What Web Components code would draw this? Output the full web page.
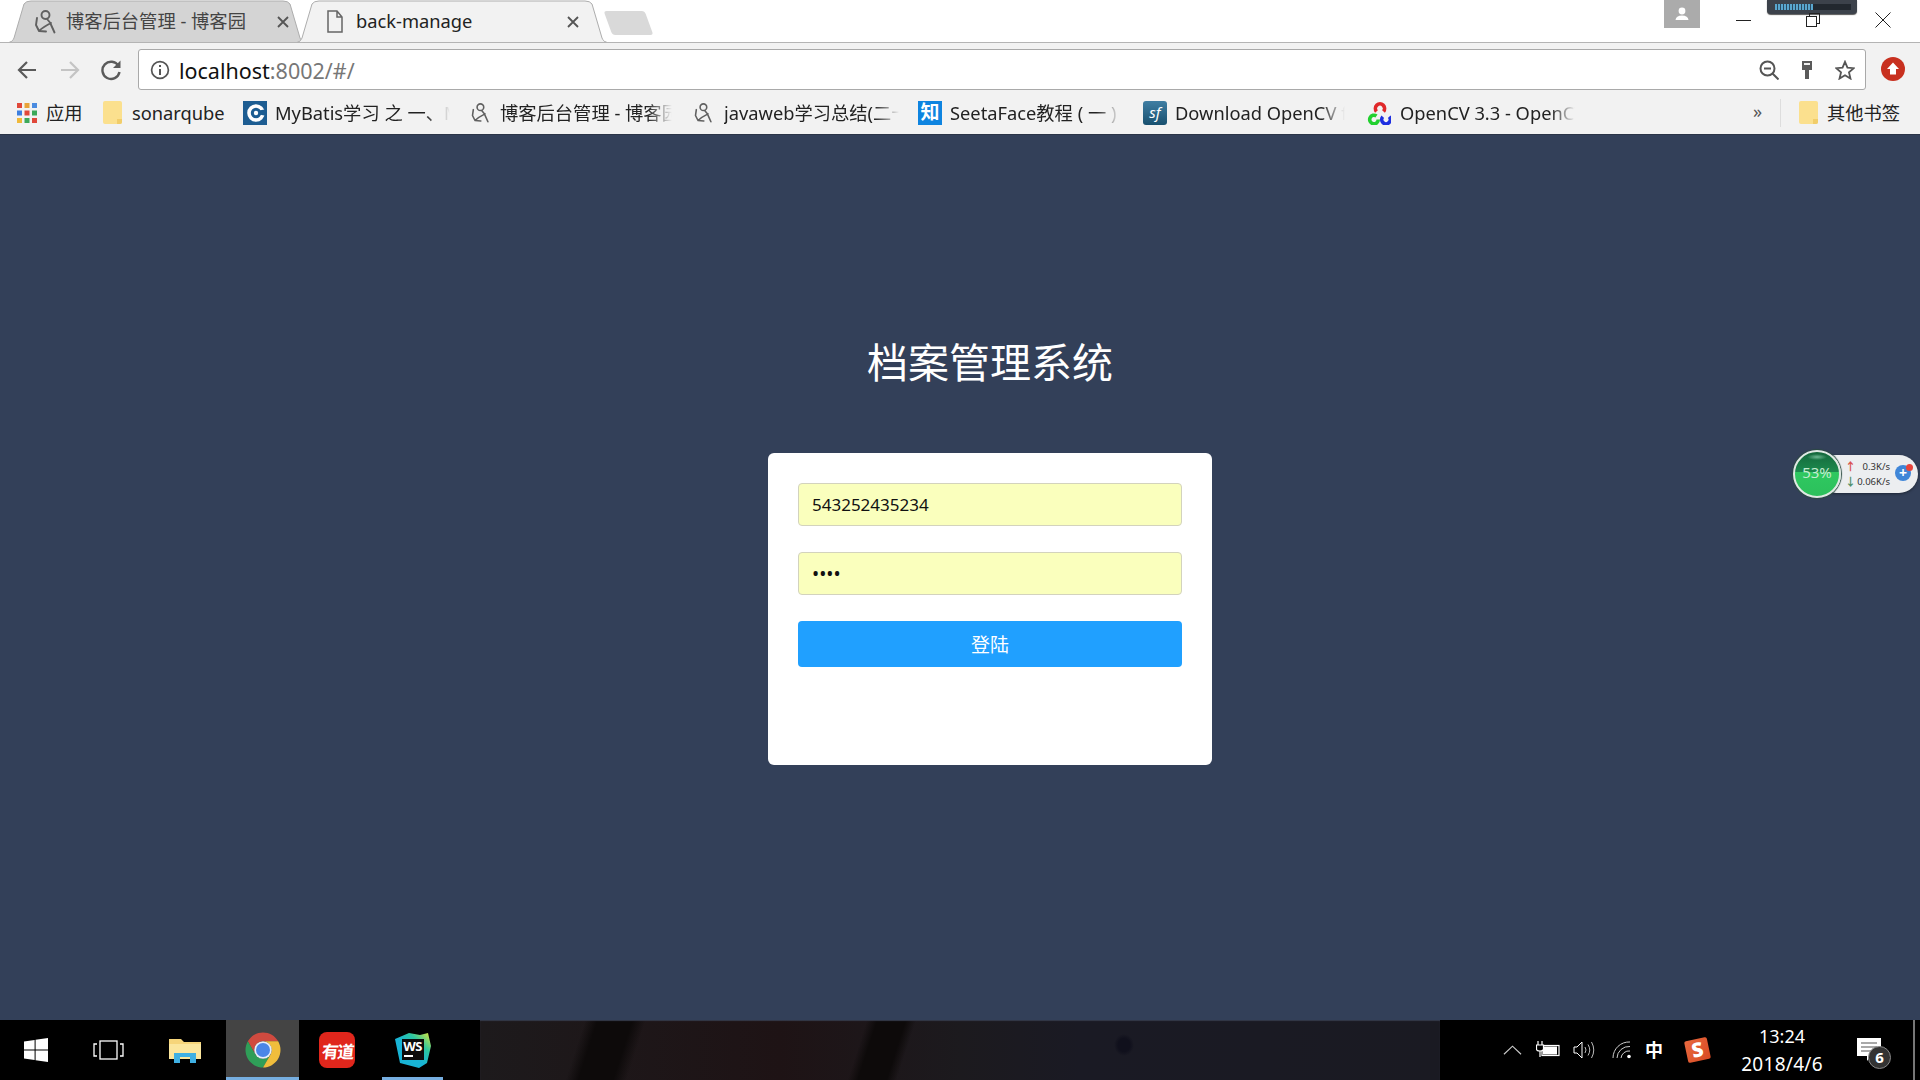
<!DOCTYPE html>
<html lang="zh-CN">
  <head>
    <meta charset="UTF-8">
    <title>back-manage</title>
    <style>
      html, body { margin: 0; height: 100%; overflow: hidden; }
      body { font-family: "Noto Sans", "Noto Sans CJK SC", sans-serif; }
      desktop-screen { --cjk: "Noto Sans", "Noto Sans CJK SC", sans-serif; }
    </style>
  </head>
  <body>
    <desktop-screen>
      <tab-strip>
        <browser-tab w="296" label="博客后台管理 - 博客园" icon="cnblogs" style="--pad:25px;--gap:10px;--end:16px;--fill:#d4d4d4;--ink:#444;margin-left:9px"></browser-tab>
        <browser-tab w="310" label="back-manage" icon="page" active style="--pad:30px;--gap:13px;--end:28px;--fill:#f2f2f2;--ink:#222;margin-left:-8px"></browser-tab>
      </tab-strip>
      <address-bar url-host="localhost" url-rest=":8002/#/"></address-bar>
      <bookmark-bar>
        <bookmark-item w="86" icon="apps" gap="9">应用</bookmark-item>
        <bookmark-item w="140" icon="folder" size="19" gap="10">sonarqube</bookmark-item>
        <bookmark-item w="227" tw="175" fade icon="mybatis" size="24">MyBatis学习 之 一、MyBatis</bookmark-item>
        <bookmark-item w="223" tw="172" fade icon="cnblogs" size="20" gap="10">博客后台管理 - 博客园</bookmark-item>
        <bookmark-item w="225" tw="175" fade icon="cnblogs" size="20" gap="11">javaweb学习总结(二十)</bookmark-item>
        <bookmark-item w="225" tw="170" fade icon="zhi" size="24">SeetaFace教程 ( 一 )</bookmark-item>
        <bookmark-item w="224" tw="170" fade icon="sf" size="24">Download OpenCV for</bookmark-item>
        <bookmark-item w="386" tw="175" fade icon="opencv" size="24" gap="9">OpenCV 3.3 - OpenCV</bookmark-item>
      </bookmark-bar>
      <login-page>
        <login-card>
          <login-field value="543252435234"></login-field>
          <login-field value="••••" secret></login-field>
          <login-button>登陆</login-button>
        </login-card>
      </login-page>
      <task-bar></task-bar>
    </desktop-screen>

    <script>
      const ICONS = {
        cnblogs: `<svg viewBox="0 0 22 24" fill="none" stroke="#606060" stroke-width="1.9" stroke-linecap="round" stroke-linejoin="round"><circle cx="11.5" cy="5" r="4"/><path d="M13 9 L16 12.5 L20.5 22.5 M3 8 L2 15 L5 21 L12 21.5 M5 21 C9 17 13 15 17 13"/></svg>`,
        page: `<svg viewBox="0 0 16 23" fill="none" stroke="#666" stroke-width="1.5"><path d="M1 1 H10 L15 7 V22 H1 Z M10 1 V7 H15"/></svg>`,
        back: `<svg viewBox="0 0 20 20" fill="none" stroke="#5a5a5a" stroke-width="2.2"><path d="M19 10 H2 M10 2 L2 10 L10 18"/></svg>`,
        forward: `<svg viewBox="0 0 20 20" fill="none" stroke="#c4c4c4" stroke-width="2.2"><path d="M1 10 H18 M10 2 L18 10 L10 18"/></svg>`,
        reload: `<svg viewBox="0 0 22 22" fill="none" stroke="#5a5a5a" stroke-width="2.4"><path d="M18.5 7 A8.6 8.6 0 1 0 19.5 13"/><path d="M20.5 1.5 V9 H13" fill="#5a5a5a" stroke="none"/></svg>`,
        info: `<svg viewBox="0 0 20 20" fill="none" stroke="#555" stroke-width="1.7"><circle cx="10" cy="10" r="8.4"/><path d="M10 9 V15 M10 5 V7" stroke-width="2"/></svg>`,
        zoomout: `<svg viewBox="0 0 20 20" fill="none" stroke="#555" stroke-width="2"><circle cx="8.5" cy="8.5" r="7"/><path d="M5 8.5 H12 M13.5 13.5 L19.5 19.5"/></svg>`,
        key: `<svg viewBox="0 0 12 20" fill="#5a5a5a"><path d="M1 1 H11 V10 H8 V19 H4 V10 H1 Z"/><rect x="3" y="3" width="6" height="2" fill="#eee"/></svg>`,
        star: `<svg viewBox="0 0 22 22" fill="none" stroke="#555" stroke-width="2"><path d="M11 2 L13.7 8.4 L20.6 9 L15.4 13.6 L17 20.4 L11 16.8 L5 20.4 L6.6 13.6 L1.4 9 L8.3 8.4 Z"/></svg>`,
        upload: `<svg viewBox="0 0 24 24"><circle cx="12" cy="12" r="12" fill="#c8301f"/><path d="M12 5.5 L18 12 H15 V17.5 H9 V12 H6 Z" fill="#fff"/></svg>`,
        apps: `<svg viewBox="0 0 20 20"><g><rect width="5" height="5" fill="#e0483a"/><rect x="7.5" width="5" height="5" fill="#e8a33a"/><rect x="15" width="5" height="5" fill="#4a8be0"/><rect y="7.5" width="5" height="5" fill="#3d7fe0"/><rect x="7.5" y="7.5" width="5" height="5" fill="#e0483a"/><rect x="15" y="7.5" width="5" height="5" fill="#3da95a"/><rect y="15" width="5" height="5" fill="#f0b93a"/><rect x="7.5" y="15" width="5" height="5" fill="#3da95a"/><rect x="15" y="15" width="5" height="5" fill="#e0483a"/></g></svg>`,
        folder: `<svg viewBox="0 0 19 23"><path d="M2 0 H17 Q19 0 19 2 V21 Q19 23 17 23 H2 Q0 23 0 21 V2 Q0 0 2 0 Z" fill="#fbe08e"/><path d="M14 23 V18 H19 V21 Q19 23 17 23 Z" fill="#f1cd6a"/></svg>`,
        mybatis: `<svg viewBox="0 0 24 24"><rect width="24" height="24" fill="#1d5d92"/><circle cx="13" cy="12" r="7" fill="none" stroke="#fff" stroke-width="3.6"/><circle cx="13" cy="12" r="2.2" fill="#fff"/><path d="M16 9.5 L24 8 V15 L16 13.5 Z" fill="#1d5d92"/></svg>`,
        opencv: `<svg viewBox="0 0 24 24" fill="none" stroke-width="3.6"><path d="M9.5 10.5 A4.6 4.6 0 1 1 16.5 10.5" stroke="#e0282a"/><path d="M9.5 15 A4.3 4.3 0 1 0 11.3 18.5" stroke="#22d02f"/><path d="M15.8 15.7 A4.3 4.3 0 1 0 22.2 15.7" stroke="#1e2fe0"/></svg>`,
        windows: `<svg viewBox="0 0 24 24" fill="#fff"><path d="M0 3.4 L10.6 2 V11.4 H0 Z M11.6 1.8 L24 0 V11.4 H11.6 Z M0 12.6 H10.6 V22 L0 20.6 Z M11.6 12.6 H24 V24 L11.6 22.2 Z"/></svg>`,
        taskview: `<svg viewBox="0 0 31 20" fill="none" stroke="#fff" stroke-width="1.3"><rect x="7" y="1" width="17" height="18"/><path d="M4 4 H1 V16 H4 M27 4 H30 V16 H27"/></svg>`,
        explorer: `<svg viewBox="0 0 32 26"><path d="M0 2 H12 L15 5 H32 V22 H0 Z" fill="#f6d57a"/><path d="M0 7 H32 V22 H0 Z" fill="#fbe69d"/><path d="M5 26 V16 H27 V26 H21 V20 H11 V26 Z" fill="#3fb0e3"/></svg>`,
        chrome: `<svg viewBox="0 0 48 48"><path d="M41.32 14 A20 20 0 0 0 6.68 14 L15.34 29 A10 10 0 0 1 24 14 Z" fill="#cf4a3f"/><path d="M6.68 14 A20 20 0 0 0 24 44 L32.66 29 A10 10 0 0 1 15.34 29 Z" fill="#2f9e58"/><path d="M24 44 A20 20 0 0 0 41.32 14 L24 14 A10 10 0 0 1 32.66 29 Z" fill="#f0bd3c"/><circle cx="24" cy="24" r="10" fill="#e8eef8"/><circle cx="24" cy="24" r="8" fill="#4a86e8"/></svg>`,
        wsshape: `<svg viewBox="0 0 36 36"><defs><linearGradient id="ws" x1="0" y1="1" x2="1" y2="0"><stop offset=".45" stop-color="#18b4d6"/><stop offset=".7" stop-color="#2cc7a0"/><stop offset="1" stop-color="#e2e83a"/></linearGradient></defs><path d="M0 7 L14 1 L25 3 L33 1 L36 14 L32 31 L24 36 L5 31 Z" fill="url(#ws)"/></svg>`,
        wifi: `<svg viewBox="0 0 20 18" fill="none" stroke="#ccc" stroke-width="1"><path d="M1 17 A16 16 0 0 1 18 1 M5 17 A12 12 0 0 1 18 5.5 M9 17 A8 8 0 0 1 18 10"/><circle cx="17" cy="15.5" r="1.8" fill="#fff" stroke="none"/></svg>`,
        battery: `<svg viewBox="0 0 24 18" fill="none" stroke="#fff" stroke-width="1.2"><rect x="6" y="4.5" width="17" height="10"/><rect x="7" y="5.5" width="14" height="8" fill="#fff" stroke="none"/><path d="M2 0 V4 M6 0 V4 M0.5 4 H7.5 V8 Q7.5 10 4 10 Q0.5 10 0.5 8 Z M4 10 V16" fill="#000"/></svg>`,
        speaker: `<svg viewBox="0 0 23 18" fill="none" stroke="#bbb" stroke-width="1"><path d="M1 6 H4 L9 1 V17 L4 12 H1 Z" stroke="#fff"/><path d="M12 6 Q14 9 12 12 M15 3.5 Q18.5 9 15 14.5 M18.5 1 Q23 9 18.5 17"/></svg>`,
        chevron: `<svg viewBox="0 0 20 10" fill="none" stroke="#ccc" stroke-width="1.2"><path d="M1 9.5 L10 1 L19 9.5"/></svg>`,
        note: `<svg viewBox="0 0 24 24"><path d="M0 0 H24 V18 H14 L10 23 V18 H0 Z" fill="#fff"/><path d="M4 5 H20 M4 9 H20 M4 13 H15" stroke="#555" stroke-width="1.2"/></svg>`
      }

      // small boxed icons that hold real text instead of a path
      const TEXT_ICONS = {
        zhi: `<span style="display:flex;align-items:center;justify-content:center;width:100%;height:100%;background:#0e84e0;color:#fff;font-size:19px;font-weight:700;line-height:1">知</span>`,
        sf: `<span style="display:flex;align-items:center;justify-content:center;width:100%;height:100%;background:linear-gradient(#3f7ea3,#18506f);border-radius:3px;color:#fff;font-size:15px;font-style:italic;line-height:1">sf</span>`
      }

      class UiIcon extends HTMLElement {
        connectedCallback() {
          const name = this.getAttribute('name')
          this.attachShadow({ mode: 'open' }).innerHTML = `
            <style>
              :host { display: inline-flex; flex: none; width: var(--w, 20px); height: var(--h, 20px); }
              svg { display: block; width: 100%; height: 100%; }
            </style>
            ${ICONS[name] || TEXT_ICONS[name] || ''}`
        }
      }

      class DesktopScreen extends HTMLElement {
        constructor() {
          super()
          this.attachShadow({ mode: 'open' }).innerHTML = `
            <style>
              :host { display: flex; flex-direction: column; width: 1920px; height: 1080px; color: #222; font-family: var(--cjk); }
            </style>
            <slot></slot>`
        }
      }

      class TabStrip extends HTMLElement {
        constructor() {
          super()
          this.attachShadow({ mode: 'open' }).innerHTML = `
            <style>
              :host { display: flex; position: relative; flex: none; height: 43px; box-sizing: border-box; background: #fff; border-bottom: 1px solid #b4b4b4; }
              .new-tab { width: 41px; height: 24px; margin: 11px 0 0 1px; background: #d9d9d9; border-radius: 3px; transform: skewX(20deg); }
              .tabs { display: flex; align-items: flex-start; }
              .profile { display: flex; justify-content: center; align-items: center; width: 36px; height: 28px; margin-left: auto; margin-right: 9px; background: #ababab; }
              .profile svg { width: 16px; height: 16px; }
              .win { display: flex; justify-content: center; align-items: center; width: 70px; height: 40px; position: relative; }
              .win svg { width: 16px; height: 16px; }
              .win.mid { width: 69px; }
              .end { margin-right: 2px; }
              .gadget { position: absolute; left: 1767px; top: 0; width: 90px; height: 14px; background: #3c424b; border-radius: 0 0 4px 4px; box-shadow: 0 1px 1px #555; }
              .gadget i { display: block; position: absolute; left: 8px; right: 6px; top: 4px; height: 6px; background: #22282f; }
              .gadget i::before { content: ""; display: block; width: 38px; height: 100%; background: repeating-linear-gradient(90deg, #5aa7cf 0 2px, #2a4a60 2px 3px); }
            </style>
            <div class="tabs"><slot></slot></div>
            <div class="new-tab"></div>
            <div class="gadget"><i></i></div>
            <div class="profile"><svg viewBox="0 0 16 16" fill="#fff"><circle cx="8" cy="5" r="3.4"/><path d="M1.5 14 Q2 9.5 8 9.5 Q14 9.5 14.5 14 Z"/></svg></div>
            <div class="win mid"><svg viewBox="0 0 16 16" stroke="#222" fill="none"><path d="M0 8.5 H15"/></svg></div>
            <div class="win"><svg viewBox="0 0 16 16" stroke="#222" fill="none" shape-rendering="crispEdges"><rect x="1.5" y="4.5" width="10" height="10"/><path d="M4.5 4 V1.5 H14.5 V11.5 H12"/></svg></div>
            <div class="win end"><svg viewBox="0 0 16 16" stroke="#222" fill="none"><path d="M.5 .5 L15.5 15.5 M15.5 .5 L.5 15.5"/></svg></div>`
        }
      }

      class BrowserTab extends HTMLElement {
        connectedCallback() {
          const w = +this.getAttribute('w')
          const s = 19
          const d = `M0.5 42 C3 42 4 40 5 38 L${s - 4} 4 Q${s - 2} 1 ${s + 3} 1 L${w - s - 3} 1 Q${w - s + 2} 1 ${w - s + 4} 4 L${w - 5} 38 C${w - 4} 40 ${w - 3} 42 ${w - 0.5} 42`
          const isPage = this.getAttribute('icon') === 'page'
          this.style.width = w + 'px'
          this.attachShadow({ mode: 'open' }).innerHTML = `
            <style>
              :host { display: flex; position: relative; z-index: 0; height: 43px; align-items: center; box-sizing: border-box; padding: 0 var(--end) 0 var(--pad); color: var(--ink); font-size: 18.3px; }
              :host([active]) { z-index: 1; }
              svg.shape { position: absolute; left: 0; top: 0; width: 100%; height: 100%; z-index: -1; }
              .label { flex: 1; margin-left: var(--gap); white-space: nowrap; line-height: 1; }
              .close { width: 12px; height: 12px; }
              ui-icon { --w: ${isPage ? 16 : 22}px; --h: ${isPage ? 23 : 24}px; }
            </style>
            <svg class="shape" viewBox="0 0 ${w} 43"><path d="${d}" fill="var(--fill)" stroke="#adadad"/></svg>
            <ui-icon name="${this.getAttribute('icon')}"></ui-icon>
            <span class="label">${this.getAttribute('label')}</span>
            <svg class="close" viewBox="0 0 12 12" stroke="#555" stroke-width="1.8"><path d="M1 1 L11 11 M11 1 L1 11"/></svg>`
        }
      }

      class AddressBar extends HTMLElement {
        connectedCallback() {
          this.attachShadow({ mode: 'open' }).innerHTML = `
            <style>
              :host { display: flex; flex: none; height: 47px; box-sizing: border-box; padding-top: 6px; background: #f2f2f2; }
              .nav { display: flex; align-items: center; height: 41px; }
              .nav ui-icon:nth-child(1) { margin-left: 17px; }
              .nav ui-icon:nth-child(2) { margin-left: 23px; }
              .nav ui-icon:nth-child(3) { margin-left: 20px; --w: 22px; --h: 22px; }
              .box { display: flex; align-items: center; width: 1728px; height: 41px; margin-left: 16px; box-sizing: border-box; padding: 0 10px 0 11px; background: #fff; border: 1px solid #a9a9a9; border-radius: 3px; }
              .url { margin-left: 9px; font-size: 21.5px; line-height: 1; color: #111; white-space: nowrap; position: relative; top: 1px; }
              .url span { color: #777; }
              .tools { display: flex; align-items: center; margin-left: auto; gap: 22px; }
              .tools ui-icon:nth-child(2) { --w: 12px; }
              .red { margin: 8px 0 0 15px; --w: 24px; --h: 24px; }
            </style>
            <div class="nav">
              <ui-icon name="back"></ui-icon>
              <ui-icon name="forward"></ui-icon>
              <ui-icon name="reload"></ui-icon>
            </div>
            <div class="box">
              <ui-icon name="info"></ui-icon>
              <div class="url">${this.getAttribute('url-host')}<span>${this.getAttribute('url-rest')}</span></div>
              <div class="tools">
                <ui-icon name="zoomout"></ui-icon>
                <ui-icon name="key"></ui-icon>
                <ui-icon name="star"></ui-icon>
              </div>
            </div>
            <ui-icon class="red" name="upload"></ui-icon>`
        }
      }

      class BookmarkBar extends HTMLElement {
        constructor() {
          super()
          this.attachShadow({ mode: 'open' }).innerHTML = `
            <style>
              :host { display: flex; flex: none; align-items: center; height: 45px; box-sizing: border-box; padding: 1px 0 0 17px; background: #f2f2f2; border-bottom: 1px solid #2b3548; font-size: 18.3px; }
              .more { width: 12px; font-size: 18px; color: #555; line-height: 1; position: relative; top: -2px; }
              .sep { width: 1px; height: 28px; margin: 0 0 0 15px; background: #ddd; }
              .other { margin-left: 18px; }
            </style>
            <slot></slot>
            <div class="more">»</div>
            <div class="sep"></div>
            <bookmark-item class="other" icon="folder" size="19" gap="9" w="110">其他书签</bookmark-item>`
        }
      }

      class BookmarkItem extends HTMLElement {
        connectedCallback() {
          const size = this.getAttribute('size') || 20
          const tw = this.getAttribute('tw')
          this.style.width = this.getAttribute('w') + 'px'
          this.attachShadow({ mode: 'open' }).innerHTML = `
            <style>
              :host { display: flex; flex: none; align-items: center; gap: ${this.getAttribute('gap') || 8}px; color: #222; }
              ui-icon { --w: ${size}px; --h: ${size == 19 ? 23 : size}px; }
              .text { white-space: nowrap; overflow: hidden; line-height: 26px; ${tw ? `width: ${tw}px;` : ''} }
              :host([fade]) .text { -webkit-mask-image: linear-gradient(90deg, #000 86%, transparent 100%); mask-image: linear-gradient(90deg, #000 86%, transparent 100%); }
            </style>
            <ui-icon name="${this.getAttribute('icon')}"></ui-icon>
            <div class="text"><slot></slot></div>`
        }
      }

      class LoginPage extends HTMLElement {
        constructor() {
          super()
          this.attachShadow({ mode: 'open' }).innerHTML = `
            <style>
              :host { display: flex; flex: 1; position: relative; flex-direction: column; align-items: center; box-sizing: border-box; padding: 197px 0 0 60px; background: #334059; }
              h1 { margin: 0 0 61px; font-size: 41px; font-weight: 400; line-height: 60px; color: #fff; }
              .meter { position: absolute; left: 1793px; top: 315px; width: 127px; height: 48px; }
              .pill { position: absolute; left: 24px; right: 2px; top: 5px; height: 38px; background: #eceef0; border-radius: 19px; box-shadow: 0 1px 3px rgba(0,0,0,.4); }
              .ball { position: absolute; left: 0; top: 0; width: 48px; height: 48px; box-sizing: border-box; border: 2px solid #dfe9e3; border-radius: 50%; background: radial-gradient(ellipse 10px 3px at 50% 5px, #6fb893, transparent), linear-gradient(#14683c 0, #1c8a4d 45%, #2fc860 45%, #2cc05c); box-shadow: 0 0 1px 1px #2c4a42; color: #c4ecd0; font-size: 15px; line-height: 41px; text-align: center; }
              .speed { position: absolute; right: 30px; font-size: 9.5px; line-height: 12px; color: #333; white-space: nowrap; }
              .arrow { position: absolute; left: 52px; font-size: 11px; font-weight: 700; line-height: 12px; }
              .plus { position: absolute; left: 102px; top: 15px; width: 16px; height: 16px; border-radius: 50%; background: #3f86d8; color: #fff; font-size: 14px; font-weight: 700; line-height: 15px; text-align: center; }
              .dot { position: absolute; left: 113px; top: 14px; width: 7px; height: 7px; border-radius: 50%; background: #e8443c; }
            </style>
            <h1>档案管理系统</h1>
            <slot></slot>
            <div class="meter">
              <div class="pill"></div>
              <div class="ball">53%</div>
              <div class="arrow" style="top:11px;color:#d9534f">↑</div>
              <div class="arrow" style="top:26px;color:#4f8f6b">↓</div>
              <div class="speed" style="top:11px">0.3K/s</div>
              <div class="speed" style="top:26px">0.06K/s</div>
              <div class="plus">+</div>
              <div class="dot"></div>
            </div>`
        }
      }

      class LoginCard extends HTMLElement {
        constructor() {
          super()
          this.attachShadow({ mode: 'open' }).innerHTML = `
            <style>
              :host { display: flex; flex-direction: column; gap: 26px; width: 444px; height: 312px; box-sizing: border-box; padding: 30px; background: #fff; border-radius: 6px; }
            </style>
            <slot></slot>`
        }
      }

      class LoginField extends HTMLElement {
        connectedCallback() {
          this.attachShadow({ mode: 'open' }).innerHTML = `
            <style>
              :host { display: flex; align-items: center; height: 43px; box-sizing: border-box; padding: 0 13px; background: #faffbd; border: 1px solid #d3d3bd; border-radius: 4px; font-size: 17px; color: #111; }
              :host([secret]) span { font-size: 19px; }
            </style>
            <span>${this.getAttribute('value')}</span>`
        }
      }

      class LoginButton extends HTMLElement {
        constructor() {
          super()
          this.attachShadow({ mode: 'open' }).innerHTML = `
            <style>
              :host { display: flex; justify-content: center; align-items: center; height: 46px; background: #20a0ff; border-radius: 4px; color: #fff; font-size: 19px; }
            </style>
            <slot></slot>`
        }
      }

      class TaskBar extends HTMLElement {
        connectedCallback() {
          this.attachShadow({ mode: 'open' }).innerHTML = `
            <style>
              :host { display: flex; flex: none; height: 60px; background: #000; color: #fff; }
              .apps { display: flex; width: 480px; }
              .btn { display: flex; justify-content: center; align-items: center; height: 60px; box-sizing: border-box; position: relative; }
              .on { background: #444; }
              .run::after { content: ""; position: absolute; left: var(--in, 0); right: var(--in, 0); bottom: 0; height: 3px; background: #76aee0; }
              .wall { width: 960px; background:
                radial-gradient(ellipse 10px 11px at 644px 25px, #10101c 60%, transparent 100%),
                linear-gradient(108deg, transparent 0 100px, #0d0a0a 112px 145px, transparent 158px),
                linear-gradient(108deg, transparent 0 368px, #0d0a0a 378px 405px, transparent 415px),
                linear-gradient(90deg, #1d1a1c 0, #1e1315 300px, #1c1a1e 480px, #1a1a24 600px, #1a1a22 960px); box-shadow: inset 0 1px 1px #353a4a; }
              .tray { display: flex; flex: 1; align-items: center; position: relative; }
              .youdao { display: flex; justify-content: center; align-items: center; width: 36px; height: 36px; border-radius: 8px; background: #e0261c; color: #fff; font-size: 17px; font-weight: 700; letter-spacing: -1.5px; }
              .youdao span { transform: skewX(-6deg); }
              .ws { position: relative; width: 36px; height: 36px; }
              .ws ui-icon { position: absolute; inset: 0; --w: 36px; --h: 36px; }
              .ws b { position: absolute; left: 7px; top: 7px; width: 22px; height: 21px; background: #0c0c0c; color: #fff; font-size: 13px; line-height: 14px; text-align: center; letter-spacing: -.5px; }
              .ws b::after { content: ""; position: absolute; left: 2px; bottom: 3px; width: 9px; height: 2px; background: #fff; }
              .ime { font-size: 18px; font-weight: 700; line-height: 1; }
              .sogou { width: 23px; height: 22px; transform: rotate(-12deg); background: linear-gradient(135deg, #e8693f, #d84a22); border-radius: 2px; font-size: 20px; font-weight: 900; line-height: 21px; text-align: center; }
              .clock { width: 90px; text-align: center; font-size: 18px; line-height: 28px; }
              .clock div:last-child { font-size: 19px; letter-spacing: .3px; white-space: nowrap; }
              .note { position: relative; width: 24px; height: 24px; }
              .note ui-icon { --w: 24px; --h: 24px; }
              .badge { position: absolute; left: 11px; top: 8px; width: 23px; height: 23px; box-sizing: border-box; border: 1px solid #888; border-radius: 50%; background: #333; font-size: 15px; font-weight: 700; line-height: 21px; text-align: center; }
              .edge { position: absolute; left: 473px; top: 0; width: 2px; height: 60px; background: #777; }
            </style>
            <div class="apps">
              <div class="btn" style="width:72px"><ui-icon name="windows" style="--w:24px;--h:24px"></ui-icon></div>
              <div class="btn" style="width:72px"><ui-icon name="taskview" style="--w:31px;--h:20px"></ui-icon></div>
              <div class="btn" style="width:82px"><ui-icon name="explorer" style="--w:32px;--h:26px"></ui-icon></div>
              <div class="btn on run" style="width:73px"><ui-icon name="chrome" style="--w:42px;--h:42px"></ui-icon></div>
              <div class="btn" style="width:76px"><div class="youdao"><span>有道</span></div></div>
              <div class="btn run" style="width:75px;--in:7px"><div class="ws"><ui-icon name="wsshape"></ui-icon><b>WS</b></div></div>
            </div>
            <div class="wall"></div>
            <div class="tray">
              <ui-icon name="chevron" style="--w:19px;--h:10px;margin-left:63px"></ui-icon>
              <ui-icon name="battery" style="--w:24px;--h:18px;margin-left:14px"></ui-icon>
              <ui-icon name="speaker" style="--w:23px;--h:18px;margin-left:13px"></ui-icon>
              <ui-icon name="wifi" style="--w:20px;--h:18px;margin-left:16px"></ui-icon>
              <div class="ime" style="margin-left:13px">中</div>
              <div class="sogou" style="margin-left:23px">S</div>
              <div class="clock" style="margin-left:28px"><div>13:24</div><div>2018/4/6</div></div>
              <div class="note" style="margin-left:30px"><ui-icon name="note"></ui-icon><div class="badge">6</div></div>
              <div class="edge"></div>
            </div>`
        }
      }

      customElements.define('ui-icon', UiIcon)
      customElements.define('desktop-screen', DesktopScreen)
      customElements.define('tab-strip', TabStrip)
      customElements.define('browser-tab', BrowserTab)
      customElements.define('address-bar', AddressBar)
      customElements.define('bookmark-bar', BookmarkBar)
      customElements.define('bookmark-item', BookmarkItem)
      customElements.define('login-page', LoginPage)
      customElements.define('login-card', LoginCard)
      customElements.define('login-field', LoginField)
      customElements.define('login-button', LoginButton)
      customElements.define('task-bar', TaskBar)
    </script>
  </body>
</html>
